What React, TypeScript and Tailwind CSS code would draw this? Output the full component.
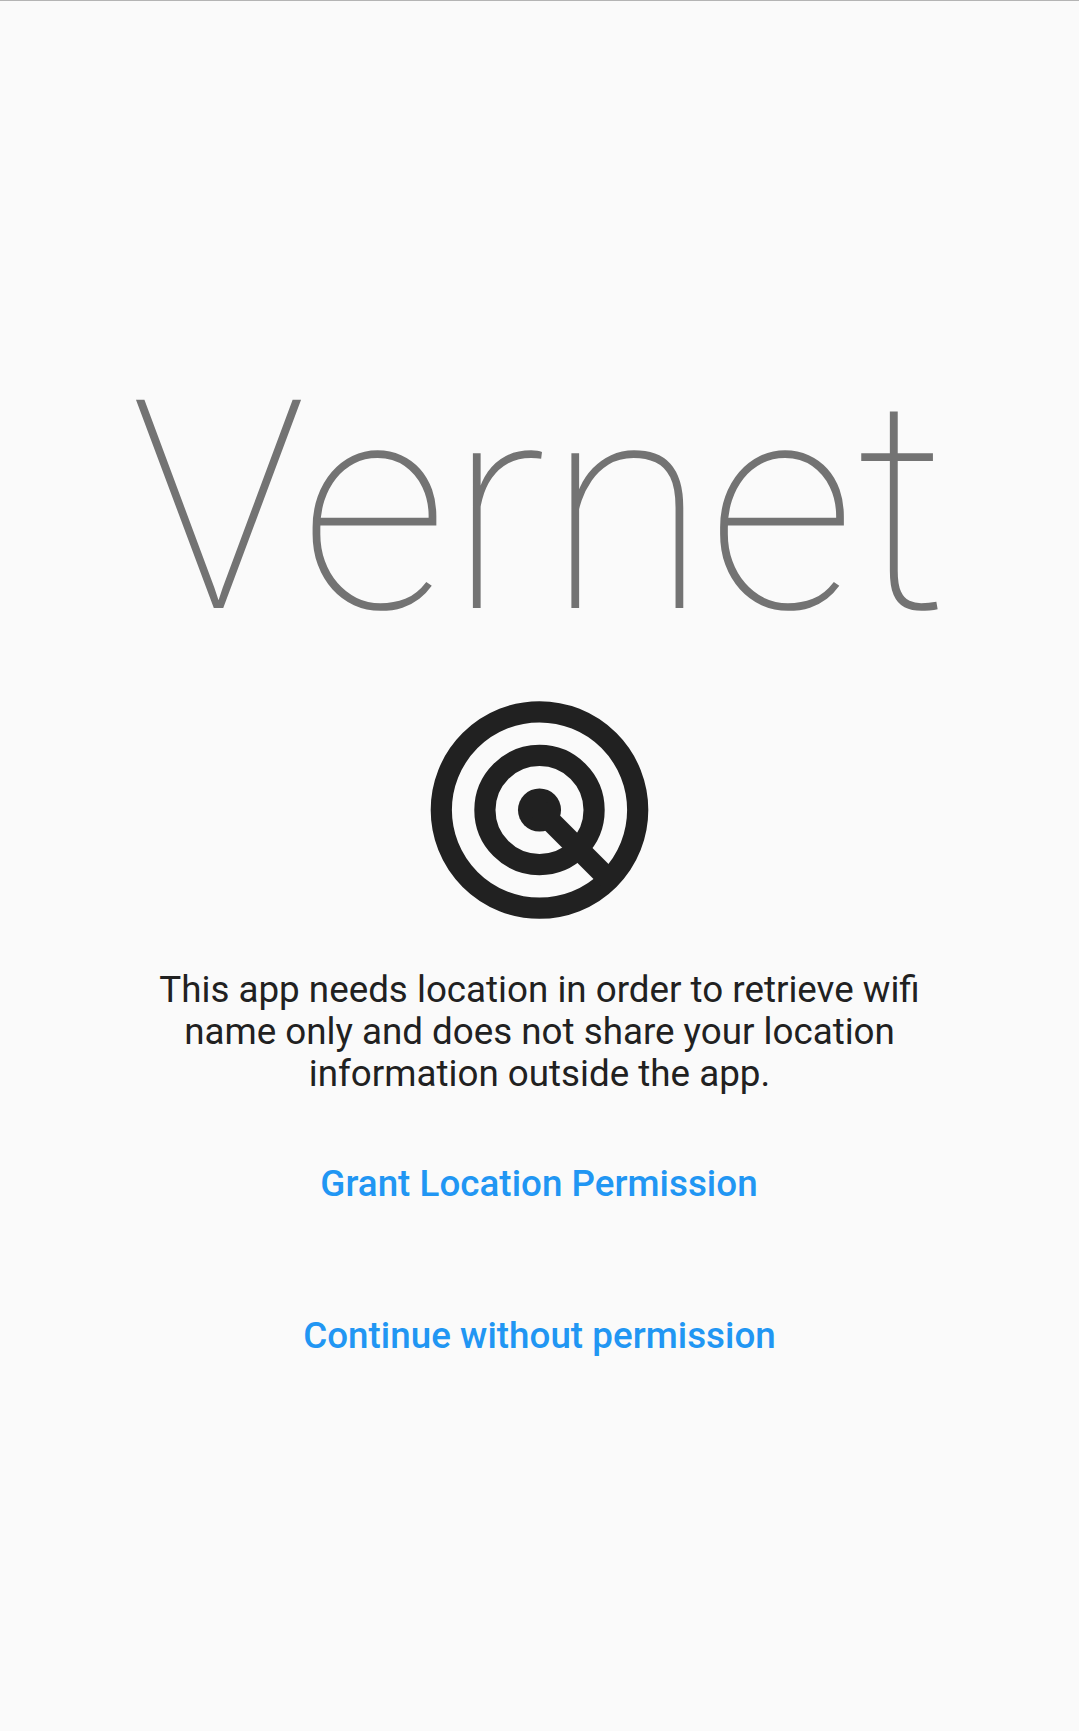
export default function App() {
  return (
    <main className="flex h-[1731px] w-full flex-col items-center border-t border-[#b4b4b4] bg-[#fafafa] text-center font-['Roboto',sans-serif]">
      <h1 className="mt-[335px] ml-px h-[344px] whitespace-nowrap text-[293px] leading-[344px] font-thin tracking-[0.5px] text-[#737373]">Vernet</h1>
      <svg className="-mt-px h-[262px] w-[261px]" viewBox="0 0 24 24" fill="none" stroke="#212121" strokeWidth="1.95">
        <circle cx="12" cy="12" r="9.03" />
        <circle cx="12" cy="12" r="5.02" />
        <circle cx="12" cy="12" r="1.98" fill="#212121" stroke="none" />
        <path d="M12 12L18.3 18.3" />
      </svg>
      <p className="mt-[28px] text-[36.75px] leading-[42px] text-[#212121]">
        This app needs location in order to retrieve wifi<br />name only and does not share your location<br />information outside the app.
      </p>
      <button className="mt-[68px] mr-px text-[36.75px] leading-[42px] font-medium tracking-[0.03px] text-[#2196f3]">Grant Location Permission</button>
      <button className="mt-[110px] text-[36.75px] leading-[42px] font-medium tracking-[0.03px] text-[#2196f3]">Continue without permission</button>
    </main>
  );
}
